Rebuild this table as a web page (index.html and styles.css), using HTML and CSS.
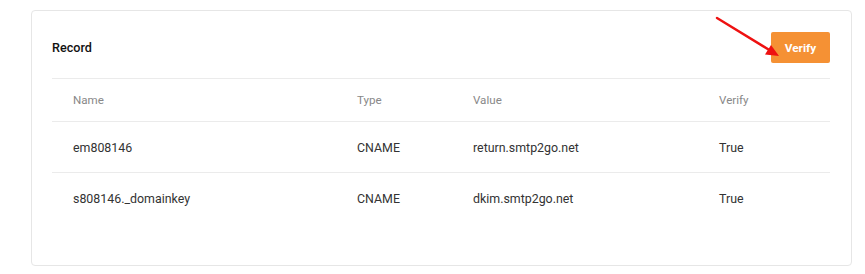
FILE: index.html
```html
<!DOCTYPE html>
<html>
<head>
<meta charset="utf-8">
<link rel="stylesheet" href="styles.css">
</head>
<body>
<div class="card">
  <div class="card-head">
    <div class="title">Record</div>
    <button class="btn">Verify</button>
  </div>
  <table class="records">
    <thead>
      <tr><th class="c-name">Name</th><th class="c-type">Type</th><th class="c-value">Value</th><th class="c-verify">Verify</th></tr>
    </thead>
    <tbody>
      <tr><td>em808146</td><td>CNAME</td><td>return.smtp2go.net</td><td>True</td></tr>
      <tr class="last"><td>s808146._domainkey</td><td>CNAME</td><td>dkim.smtp2go.net</td><td>True</td></tr>
    </tbody>
  </table>
</div>
<svg class="arrow" width="80" height="50" viewBox="0 0 80 50">
  <line x1="2" y1="3" x2="56" y2="36" stroke="#ee1111" stroke-width="2.4" stroke-linecap="round"/>
  <polygon points="64,41 50,39.5 56,30" fill="#ee1111"/>
</svg>
</body>
</html>
```
FILE: styles.css
```css
html, body { margin: 0; padding: 0; background: #fff; }
body { font-family: Roboto, "Liberation Sans", sans-serif; color: #222; position: relative; width: 865px; height: 274px; overflow: hidden; }
.card {
  margin: 10px 0 0 31px;
  width: 821px;
  height: 256px;
  box-sizing: border-box;
  border: 1px solid #e6e6e6;
  border-radius: 4px;
  padding: 0 21px 0 20px;
}
.card-head {
  display: flex;
  justify-content: space-between;
  align-items: center;
  padding: 21px 0 15px;
  border-bottom: 1px solid #ebebeb;
}
.title { font-size: 12.6px; font-weight: 500; color: #111; }
.btn {
  width: 59px; height: 31px;
  background: #f59134;
  border: none; border-radius: 2px;
  color: #fff; font-family: Roboto, "Liberation Sans", sans-serif;
  font-size: 11.8px; font-weight: 700;
  padding: 0;
}
.records { width: 100%; border-collapse: collapse; table-layout: fixed; }
.records th { font-size: 11.6px; font-weight: 400; color: #888; text-align: left; height: 42px; padding: 0; border-bottom: 1px solid #ebebeb; }
.records td { font-size: 12.4px; color: #333; height: 50px; padding: 0; border-bottom: 1px solid #ebebeb; }
.records tr.last td { border-bottom: none; }
.records th:first-child, .records td:first-child { padding-left: 21px; }
.c-name { width: 284px; }
.c-type { width: 116px; }
.c-value { width: 246px; }
.arrow { position: absolute; left: 715px; top: 15px; }
```
